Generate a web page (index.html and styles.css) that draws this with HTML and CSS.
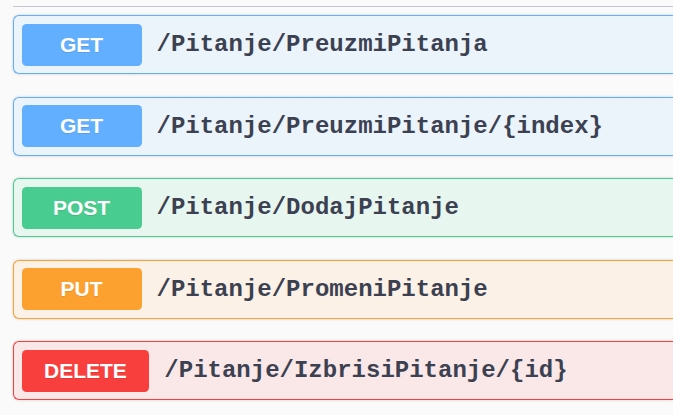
FILE: index.html
```html
<!DOCTYPE html>
<html>
<head>
<meta charset="utf-8">
<link rel="stylesheet" href="styles.css">
</head>
<body>
<div class="section">
  <div class="tag-line"></div>
  <div class="opblock get">
    <span class="method">GET</span>
    <span class="path">/Pitanje/PreuzmiPitanja</span>
  </div>
  <div class="opblock get">
    <span class="method">GET</span>
    <span class="path">/Pitanje/PreuzmiPitanje/{index}</span>
  </div>
  <div class="opblock post">
    <span class="method">POST</span>
    <span class="path">/Pitanje/DodajPitanje</span>
  </div>
  <div class="opblock put">
    <span class="method">PUT</span>
    <span class="path">/Pitanje/PromeniPitanje</span>
  </div>
  <div class="opblock delete">
    <span class="method">DELETE</span>
    <span class="path">/Pitanje/IzbrisiPitanje/{id}</span>
  </div>
</div>
</body>
</html>
```
FILE: styles.css
```css
html, body {
  margin: 0;
  padding: 0;
  background: #fafafa;
  overflow: hidden;
  width: 673px;
  height: 415px;
}
.section {
  padding: 6px 0 0 13px;
}
.tag-line {
  height: 1px;
  background: #c4c7cf;
  margin-bottom: 8px;
}
.opblock {
  display: flex;
  align-items: center;
  box-sizing: border-box;
  height: 59px;
  padding: 0 7.5px;
  border: 1px solid;
  border-right: none;
  border-radius: 6px 0 0 6px;
  margin-bottom: 22.5px;
  box-shadow: 0 0 3px rgba(0, 0, 0, .19);
}
.method {
  box-sizing: border-box;
  min-width: 120px;
  height: 42px;
  padding: 0 22.5px;
  display: flex;
  align-items: center;
  justify-content: center;
  border-radius: 4.5px;
  color: #fff;
  font-family: "Liberation Sans", Arial, sans-serif;
  font-weight: 700;
  font-size: 21px;
  text-shadow: 0 1px 0 rgba(0, 0, 0, .1);
}
.path {
  padding: 0 15px;
  font-family: "Liberation Mono", "Courier New", monospace;
  font-weight: 700;
  font-size: 24px;
  color: #3b4151;
  white-space: nowrap;
}
.get { background: #ebf3fb; border-color: #61affe; }
.get .method { background: #61affe; }
.post { background: #e8f6f0; border-color: #49cc90; }
.post .method { background: #49cc90; }
.put { background: #fbf1e6; border-color: #fca130; }
.put .method { background: #fca130; }
.delete { background: #fae7e7; border-color: #f93e3e; }
.delete .method { background: #f93e3e; }
```
